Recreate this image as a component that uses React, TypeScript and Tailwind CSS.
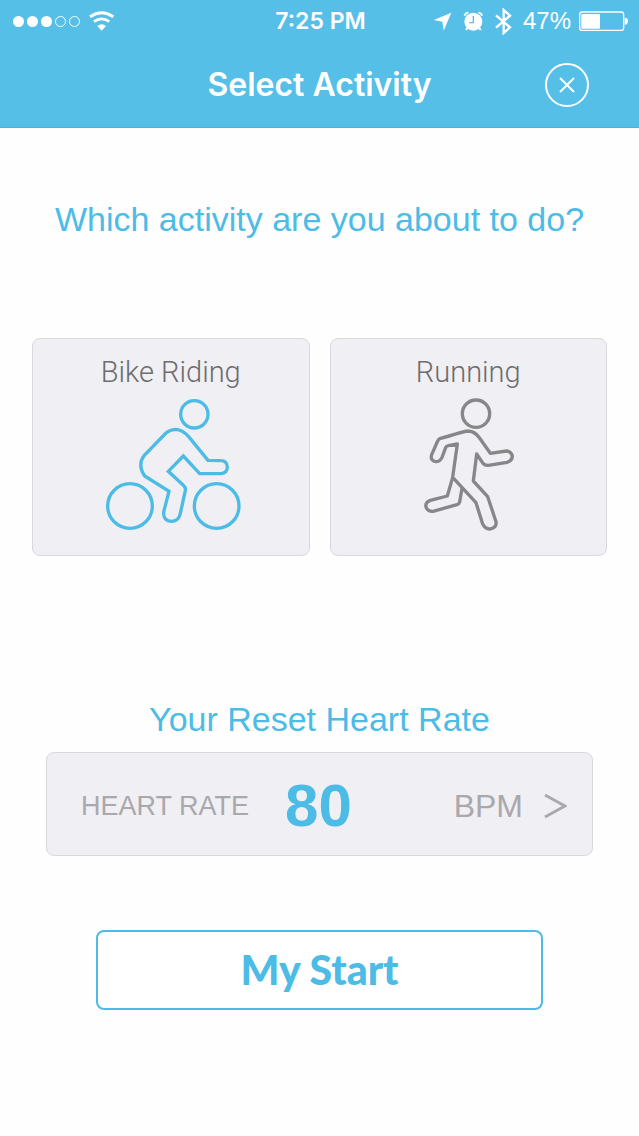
import { useState } from "react";
import type { ReactNode } from "react";

type Activity = "bike" | "run";

function WifiIcon() {
  return (
    <svg viewBox="266 31 78 60" className="h-5 w-[26px]" aria-hidden="true">
      <path d="M269 48 Q304 24 339 48" fill="none" stroke="white" strokeWidth="9" />
      <path d="M281 63 Q304 46 327 63" fill="none" stroke="white" strokeWidth="8" />
      <path d="M291 76 Q304 66 317 76 L304 90 Z" fill="white" />
    </svg>
  );
}

function LocationIcon() {
  return (
    <svg viewBox="34 34 57 57" className="size-[19px]" aria-hidden="true">
      <path d="M36 58 L89 36 L66 90 L62 63 Z" fill="white" />
    </svg>
  );
}

function AlarmIcon() {
  return (
    <svg viewBox="124 30 63 60" className="h-5 w-[21px]" aria-hidden="true">
      <circle cx="155" cy="62" r="27" fill="white" />
      <path d="M155 45 V65 H143" fill="none" stroke="#55bfe8" strokeWidth="4" />
      <path
        d="M128 44 Q131 36 140 34 M170 34 Q179 36 182 44"
        fill="none"
        stroke="white"
        strokeWidth="5"
      />
      <path d="M138 80 L133 87 M172 80 L177 87" stroke="white" strokeWidth="6" />
    </svg>
  );
}

function BluetoothIcon() {
  return (
    <svg viewBox="218 21 51 81" className="h-[27px] w-[17px]" aria-hidden="true">
      <path
        d="M221 43 L263 79 L244 96 V27 L263 44 L221 80"
        fill="none"
        stroke="white"
        strokeWidth="7"
      />
    </svg>
  );
}

function BatteryIcon() {
  return (
    <svg viewBox="477 31 147 60" className="h-5 w-[49px]" aria-hidden="true">
      <rect x="479" y="34" width="132" height="55" rx="8" fill="none" stroke="white" strokeWidth="4" />
      <rect x="484" y="40" width="56" height="44" rx="3" fill="white" />
      <path d="M614 51 Q624 51 624 61 Q624 72 614 72 Z" fill="white" />
    </svg>
  );
}

function BikeIcon() {
  return (
    <svg
      viewBox="34 162 420 402"
      className="h-[134px] w-[140px]"
      fill="none"
      stroke="currentColor"
      strokeWidth="10"
      aria-hidden="true"
    >
      <circle cx="314" cy="211" r="41" />
      <circle cx="121" cy="486" r="67" />
      <circle cx="381" cy="486" r="67" />
      <path d="M355 349 L297 278 Q278 256 257 256 Q240 257 229 267 L164 334 Q142 363 165 396 L238 442 L222 504 Q220 531 247 532 Q268 531 272 508 L287 440 Q289 431 281 424 L236 382 L281 336 L330 389 H394 Q413 387 413 369 Q412 350 394 350 Z" />
    </svg>
  );
}

function RunIcon() {
  return (
    <svg
      viewBox="64 162 282 402"
      className="h-[134px] w-[94px]"
      fill="none"
      stroke="currentColor"
      strokeWidth="10"
      strokeLinejoin="round"
      aria-hidden="true"
    >
      <circle cx="229" cy="209" r="41" />
      <path d="M272 328 L238 280 Q225 261 203 261 Q195 262 120 284 Q116 286 114 291 L96 332 Q91 350 108 353 Q121 353 127 340 L138 311 Q140 306 146 305 L173 300 L159 400 L229 476 L249 540 Q257 556 272 555 Q292 550 289 533 L264 458 L221 411 L231 330 L250 358 Q256 365 266 364 L322 355 Q338 350 338 336 Q334 321 320 321 Z" />
      <path d="M159 400 L143 456 L92 469 Q76 475 79 489 Q84 503 100 502 L172 482 Q178 480 180 474 L187 433" />
    </svg>
  );
}

function StatusBar() {
  return (
    <div className="grid h-[42px] grid-cols-[1fr_auto_1fr] items-center pr-[11px] pl-[13px] text-2xl">
      <div className="flex items-center gap-[9px]">
        <div className="flex gap-[3px]">
          <span className="size-[11px] rounded-full bg-white" />
          <span className="size-[11px] rounded-full bg-white" />
          <span className="size-[11px] rounded-full bg-white" />
          <span className="size-[11px] rounded-full border border-white" />
          <span className="size-[11px] rounded-full border border-white" />
        </div>
        <WifiIcon />
      </div>
      <span className="font-['Inter','Liberation_Sans',sans-serif] text-[23px] font-semibold">7:25 PM</span>
      <div className="flex items-center justify-end gap-[11px]">
        <LocationIcon />
        <AlarmIcon />
        <BluetoothIcon />
        <div className="flex items-center gap-2">
          <span>47%</span>
          <BatteryIcon />
        </div>
      </div>
    </div>
  );
}

function ActivityCard({
  label,
  selected,
  onSelect,
  children,
}: {
  label: string;
  selected: boolean;
  onSelect: () => void;
  children: ReactNode;
}) {
  return (
    <button
      type="button"
      aria-pressed={selected}
      onClick={onSelect}
      className="flex flex-col items-center gap-2 rounded-lg border border-[#d9d8dc] bg-[#f0eff3] pt-[15px] pb-[23px]"
    >
      <span className="font-['Roboto','Liberation_Sans',sans-serif] text-[29px] leading-9 font-light text-[#6d6c70]">
        {label}
      </span>
      <span className={selected ? "text-[#4cbce6]" : "text-[#868789]"}>{children}</span>
    </button>
  );
}

export default function App() {
  const [activity, setActivity] = useState<Activity>("bike");

  return (
    <div className="min-h-screen bg-[#fefefe] font-['Liberation_Sans',Arial,sans-serif]">
      <header className="border-b border-[#45b3df] bg-[#55bfe8] text-white">
        <StatusBar />
        <div className="grid h-[85px] grid-cols-[1fr_auto_1fr] items-center px-[50px]">
          <h1 className="col-start-2 font-['Inter','Liberation_Sans',sans-serif] text-[32px] font-semibold">
            Select Activity
          </h1>
          <button
            type="button"
            aria-label="Close"
            className="flex size-11 items-center justify-center justify-self-end rounded-full border-2 border-white"
          >
            <svg viewBox="0 0 16 16" className="size-4" stroke="white" strokeWidth="2" aria-hidden="true">
              <path d="M1 1 L15 15 M15 1 L1 15" />
            </svg>
          </button>
        </div>
      </header>

      <main className="flex flex-col px-8 pt-[71px] pb-16 text-[#4cbce6]">
        <h2 className="text-center text-[34px] leading-10">Which activity are you about to do?</h2>

        <div className="mt-[99px] grid grid-cols-2 gap-5">
          <ActivityCard label="Bike Riding" selected={activity === "bike"} onSelect={() => setActivity("bike")}>
            <BikeIcon />
          </ActivityCard>
          <ActivityCard label="Running" selected={activity === "run"} onSelect={() => setActivity("run")}>
            <RunIcon />
          </ActivityCard>
        </div>

        <section className="mt-[143px] px-[14px]">
          <h2 className="text-center text-[34px] leading-10">Your Reset Heart Rate</h2>
          <button
            type="button"
            className="mt-[13px] flex h-[104px] w-full items-center rounded-lg border border-[#d9d8dc] bg-[#f0eff3] pt-1 pr-[25px] pl-[34px] text-[#a9a8ac]"
          >
            <span className="text-[27px]">HEART RATE</span>
            <span className="ml-9 text-6xl font-bold text-[#4cbce6]">80</span>
            <span className="ml-auto text-[32px]">BPM</span>
            <svg
              viewBox="0 0 24 26"
              className="ml-5 h-[26px] w-6"
              fill="none"
              stroke="currentColor"
              strokeWidth="3"
              aria-hidden="true"
            >
              <path d="M2 2 L22 13 L2 24" />
            </svg>
          </button>
        </section>

        <button
          type="button"
          className="mx-16 mt-[74px] h-20 rounded-lg border-2 border-[#4cbce6] bg-white font-['Lato','Liberation_Sans',sans-serif] text-[41px] font-black"
        >
          My Start
        </button>
      </main>
    </div>
  );
}
